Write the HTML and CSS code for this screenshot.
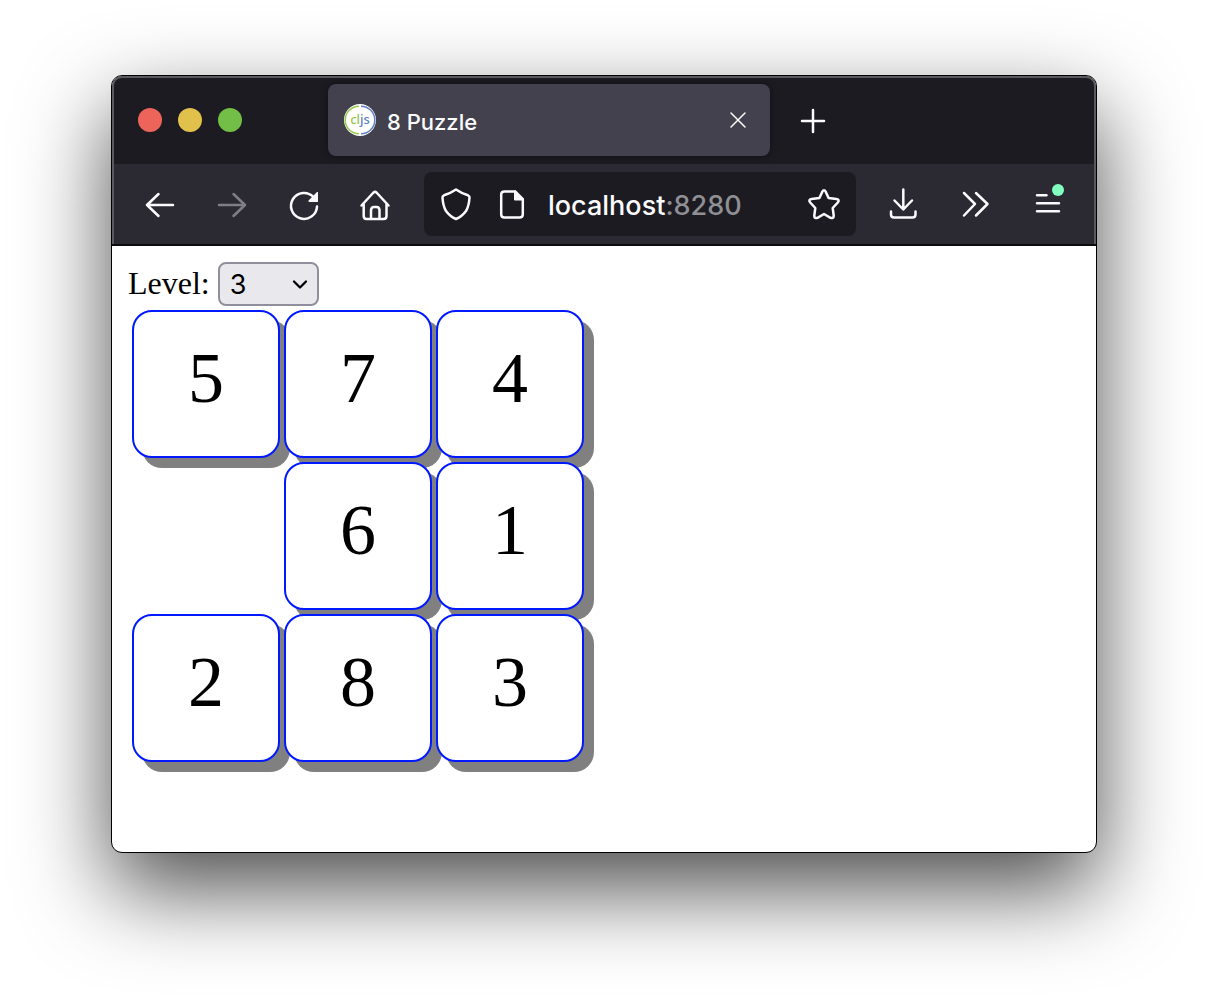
FILE: index.html
```html
<!DOCTYPE html>
<html lang="en">
<head>
<meta charset="utf-8">
<title>8 Puzzle</title>
<link rel="stylesheet" href="styles.css">
</head>
<body>
<div class="window">
  <header class="chrome">
    <div class="tabbar">
      <div class="lights">
        <button class="light red" aria-label="Close window"></button>
        <button class="light yellow" aria-label="Minimize window"></button>
        <button class="light green" aria-label="Zoom window"></button>
      </div>
      <div class="tab">
        <svg class="favicon" viewBox="0 0 32 32" aria-hidden="true">
          <circle cx="16" cy="16" r="16" fill="#fff"/>
          <path d="M15 2.200A13.800 13.800 0 0 0 15 29.800" fill="none" stroke="#96ca4b" stroke-width="1.500"/>
          <path d="M17 2.200A13.800 13.800 0 0 1 17 29.800" fill="none" stroke="#5f7fc0" stroke-width="1.500"/>
          <text x="16" y="20" text-anchor="middle" class="favicon-text"><tspan fill="#96ca4b">cl</tspan><tspan fill="#5f7fc0">js</tspan></text>
        </svg>
        <span class="tab-title">8 Puzzle</span>
        <button class="tab-close" aria-label="Close tab"><svg class="icon" viewBox="0 0 32 32"><path class="thin" d="M9 9L23 23M23 9L9 23"/></svg></button>
      </div>
      <button class="new-tab" aria-label="New tab"><svg class="icon" viewBox="0 0 32 32"><path d="M16 6V28M5 17H27"/></svg></button>
    </div>
    <nav class="toolbar">
      <button class="tool" aria-label="Back"><svg class="icon" viewBox="0 0 32 32"><path d="M29 17H3M14.500 6L3 17L14.500 28"/></svg></button>
      <button class="tool" aria-label="Forward" disabled><svg class="icon" viewBox="0 0 32 32"><path d="M3 17H29M17.500 6L29 17L17.500 28"/></svg></button>
      <button class="tool" aria-label="Reload"><svg class="icon" viewBox="0 0 32 32"><path d="M29 18.500A13 13 0 1 1 25.500 9"/><path class="solid" d="M30 4V14H21.500Q19.500 13.500 21 12L29 4Z"/></svg></button>
      <button class="tool" aria-label="Home"><svg class="icon" viewBox="0 0 32 32"><path d="M1.500 17.500L13.500 4.500Q15 3.300 16.500 4.500L28.500 17.500M3.700 16V28Q3.700 31 6.500 31H23.500Q26.500 31 26.500 28V16M11 31V22.500Q11 19 14 19H16.500Q19.500 19 19.500 22.500V31"/></svg></button>
      <div class="urlbar">
        <button class="url-icon" aria-label="Tracking protection"><svg class="icon" viewBox="0 0 32 32"><path d="M16 1.500Q21 5 28 7.300Q29.700 8 29.500 9.500Q29 18 26 23Q22 28.500 16 31Q10 28.500 6 23Q3 18 2.500 9.500Q2.300 8 4 7.300Q11 5 16 1.500Z"/></svg></button>
        <button class="url-icon" aria-label="Site information"><svg class="icon" viewBox="0 0 32 32"><path d="M19 3.500H8.500Q5.200 3.500 5.200 6.500V26.500Q5.200 29.500 8.500 29.500H23.500Q26.800 29.500 26.800 26.500V12"/><path class="solid" d="M18 2.500H20L28 10.500V12.500H19Q18 12.500 18 11.500Z"/></svg></button>
        <a class="url" href="http://localhost:8280">localhost<span class="port">:8280</span></a>
        <button class="url-icon" aria-label="Bookmark this page"><svg class="icon" viewBox="0 0 32 32"><path d="M14.300 3.700Q16 .6 17.700 3.700L20.600 10L28.500 11Q32 11.800 29.800 14.500L24.700 20L25.700 27.500Q25.800 31 22.500 29.800L16 26L9.500 29.800Q6.200 31 6.300 27.500L7.300 20L2.200 14.500Q0 11.800 3.500 11L11.400 10Z"/></svg></button>
      </div>
      <button class="tool" aria-label="Downloads"><svg class="icon" viewBox="0 0 32 32"><path d="M15.300 1.500V21M6.500 12.500L15.300 21.500L24 12.500M3 23.500V26.500Q3 29.500 6 29.500H24.500Q27.500 29.500 27.500 26.500V23.500"/></svg></button>
      <button class="tool" aria-label="More tools"><svg class="icon" viewBox="0 0 32 32"><path d="M4 5L15 16L4 27.500M16 5L27.500 16L16 27.500"/></svg></button>
      <button class="tool" aria-label="Application menu"><svg class="icon" viewBox="0 0 32 32"><path d="M5 7.300H14.500M5 15.300H27M5 23.300H27"/><circle cx="26" cy="2" r="6" fill="#80ffc0"/></svg></button>
    </nav>
  </header>
  <main class="page">
    <div class="level">
      <label for="level">Level:</label>
      <span class="picker">
        <select id="level"><option>1</option><option>2</option><option selected>3</option><option>4</option></select>
        <svg class="arrow" viewBox="0 0 16 16" aria-hidden="true"><path d="M2 5.500L8 11.500L14 5.500"/></svg>
      </span>
    </div>
    <div class="board">
      <button class="tile">5</button>
      <button class="tile">7</button>
      <button class="tile">4</button>
      <span class="blank"></span>
      <button class="tile">6</button>
      <button class="tile">1</button>
      <button class="tile">2</button>
      <button class="tile">8</button>
      <button class="tile">3</button>
    </div>
  </main>
</div>
</body>
</html>
```
FILE: styles.css
```css
* { box-sizing: border-box; }

body {
  display: flow-root;
  min-height: 100vh;
  margin: 0;
  padding: 75px 111px 140px;
  background: #fff;
  font-family: "Liberation Serif", serif;
  color: #000;
}

button {
  margin: 0;
  padding: 0;
  border: 0;
  background: none;
  color: inherit;
  font: inherit;
}

.window {
  border: 1px solid #000;
  border-radius: 11px;
  background: #fff;
  overflow: hidden;
  box-shadow: 0 36px 88px rgba(0, 0, 0, 0.7);
}

.chrome {
  border-bottom: 2px solid #0c0c0d;
  border-radius: 10px 10px 0 0;
  background: #1c1b22;
  font-family: Inter, sans-serif;
  color: #fbfbfe;
}

.tabbar {
  display: flex;
  align-items: center;
  height: 88px;
  padding: 0 24px 2px;
  border: 2px solid #5a5a5e;
  border-bottom: 0;
  border-radius: 10px 10px 0 0;
}

.lights { display: flex; gap: 16px; flex: none; width: 190px; }
.light { width: 24px; height: 24px; border-radius: 50%; }
.red { background: #ed655a; }
.yellow { background: #e1c04c; }
.green { background: #72be47; }

.tab {
  display: flex;
  align-items: center;
  flex: 0 1 442px;
  height: 72px;
  padding: 0 16px;
  border-radius: 8px;
  background: #42414d;
  box-shadow: 0 0 6px rgba(0, 0, 0, 0.5);
}

.favicon { width: 32px; height: 32px; flex: none; }
.favicon-text { font: 500 13px "Noto Sans", sans-serif; }
.tab-title { flex: 1; margin-left: 11px; padding-top: 3px; font-size: 22px; line-height: 32px; font-weight: 500; }
.tab-close, .new-tab { display: flex; }
.new-tab { margin-left: 27px; }

.icon {
  display: block;
  width: 32px;
  height: 32px;
  overflow: visible;
  fill: none;
  stroke: #fbfbfe;
  stroke-width: 2.5;
  stroke-linecap: round;
  stroke-linejoin: round;
}
.icon .thin { stroke-width: 1.5; }
.icon .solid { fill: #fbfbfe; stroke: none; }
.icon circle { stroke: none; }

.toolbar {
  display: flex;
  align-items: center;
  gap: 8px;
  height: 80px;
  padding: 0 14px;
  border: 2px solid #5a5a5e;
  border-width: 0 2px;
  background: #2b2a33;
}

.tool { display: flex; align-items: center; justify-content: center; flex: none; width: 64px; height: 64px; }
.tool:disabled { opacity: 0.4; }

.urlbar {
  display: flex;
  align-items: center;
  flex: 1;
  min-width: 0;
  height: 64px;
  margin: 0 8px;
  padding: 0 16px;
  border-radius: 8px;
  background: #1c1b22;
}
.url-icon { flex: none; width: 32px; height: 32px; margin-right: 24px; }
.url-icon:last-child { margin-right: 0; }
.url { flex: 1; margin-left: -4px; padding-top: 3px; font-size: 27px; line-height: 32px; font-weight: 500; color: #fbfbfe; text-decoration: none; }
.port { color: #8f8f94; }

.page { padding: 16px 16px 86px; }

.level { display: flex; align-items: center; gap: 8px; height: 44px; font-size: 32px; line-height: 42px; }
.level label { padding-bottom: 2px; }
.picker { display: grid; }
.picker > * { grid-area: 1 / 1; }
.picker select {
  appearance: none;
  width: 101px;
  height: 44px;
  padding: 0 10px;
  border: 2px solid #8f8f9d;
  border-radius: 8px;
  background: #e9e9ed;
  color: #000;
  font: 27px Inter, sans-serif;
}
.arrow {
  align-self: center;
  justify-self: end;
  width: 16px;
  height: 16px;
  margin-right: 11px;
  fill: none;
  stroke: #000;
  stroke-width: 2.3;
  stroke-linecap: round;
  stroke-linejoin: round;
  pointer-events: none;
}

.board {
  display: grid;
  grid-template-columns: repeat(3, 148px);
  grid-auto-rows: 148px;
  gap: 4px;
  padding: 4px;
}

.tile {
  padding-bottom: 13px;
  border: 2px solid #0019ff;
  border-radius: 20px;
  background: #fff;
  box-shadow: 10px 10px 0 #808080;
  font-size: 72px;
  line-height: 80px;
  color: #000;
}
```
